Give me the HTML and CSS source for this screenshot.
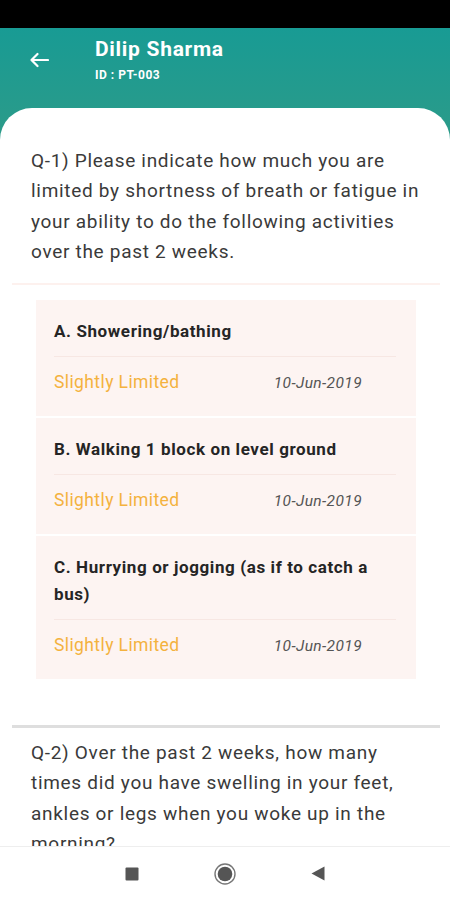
FILE: index.html
```html
<!DOCTYPE html>
<html lang="en">
<head>
<meta charset="utf-8">
<title>Dilip Sharma</title>
<link rel="stylesheet" href="styles.css">
</head>
<body>
<div class="app">
  <div class="status-bar"></div>
  <div class="top">
    <header class="header">
      <svg class="back" width="20" height="16" viewBox="0 0 20 16" aria-hidden="true">
        <path d="M19 8H2.5 M8.5 2L2.5 8l6 6" fill="none" stroke="#fff" stroke-width="2.2" stroke-linecap="round" stroke-linejoin="round"/>
      </svg>
      <div class="title-block">
        <div class="name">Dilip Sharma</div>
        <div class="pid">ID : PT-003</div>
      </div>
    </header>
    <main class="card">
      <section class="question">
        <p class="q-text">Q-1) Please indicate how much you are limited by shortness of breath or fatigue in your ability to do the following activities over the past 2 weeks.</p>
        <div class="soft-sep"></div>
        <div class="answers">
          <div class="answer">
            <div class="a-title">A. Showering/bathing</div>
            <div class="a-div"></div>
            <div class="a-row"><span class="a-status">Slightly Limited</span><span class="a-date">10-Jun-2019</span></div>
          </div>
          <div class="answer">
            <div class="a-title">B. Walking 1 block on level ground</div>
            <div class="a-div"></div>
            <div class="a-row"><span class="a-status">Slightly Limited</span><span class="a-date">10-Jun-2019</span></div>
          </div>
          <div class="answer">
            <div class="a-title">C. Hurrying or jogging (as if to catch a bus)</div>
            <div class="a-div"></div>
            <div class="a-row"><span class="a-status">Slightly Limited</span><span class="a-date">10-Jun-2019</span></div>
          </div>
        </div>
      </section>
      <div class="q-sep"></div>
      <section class="question next">
        <p class="q-text">Q-2) Over the past 2 weeks, how many times did you have swelling in your feet, ankles or legs when you woke up in the morning?</p>
      </section>
    </main>
  </div>
  <nav class="nav">
    <div class="slot">
      <svg width="14" height="14" viewBox="0 0 14 14"><rect x="0.5" y="0.5" width="13" height="13" rx="1" fill="#555"/></svg>
    </div>
    <div class="slot">
      <svg width="22" height="22" viewBox="0 0 22 22"><circle cx="11" cy="11" r="10" fill="none" stroke="#777" stroke-width="1.4"/><circle cx="11" cy="11" r="7.3" fill="#555"/></svg>
    </div>
    <div class="slot">
      <svg width="14" height="15" viewBox="0 0 14 15"><path d="M13.5 0.5V14.5L0.5 7.5Z" fill="#555"/></svg>
    </div>
  </nav>
</div>
</body>
</html>
```

FILE: styles.css
```css
* { box-sizing: border-box; }
html, body { margin: 0; padding: 0; }
body {
  width: 450px;
  height: 900px;
  overflow: hidden;
  font-family: Roboto, "Noto Sans", Arial, sans-serif;
  background: #fff;
}
.app {
  display: flex;
  flex-direction: column;
  height: 900px;
}
.status-bar {
  height: 28px;
  background: #000;
  flex: none;
}
.top {
  flex: 1;
  display: flex;
  flex-direction: column;
  background: linear-gradient(180deg, #189b94 0px, #2c9b89 110px, #2e9b88 140px);
  overflow: hidden;
}
.header {
  height: 80px;
  flex: none;
  display: flex;
  align-items: flex-start;
  padding: 9px 0 0 29px;
}
.back {
  margin-top: 14.5px;
  flex: none;
}
.title-block {
  margin-left: 46px;
  color: #fff;
}
.name {
  font-size: 21px;
  line-height: 25px;
  font-weight: 700;
  letter-spacing: 0.7px;
}
.pid {
  margin-top: 5px;
  font-size: 12px;
  line-height: 16px;
  font-weight: 700;
  letter-spacing: 0.5px;
}
.card {
  flex: 1;
  background: #fff;
  border-radius: 32px 32px 0 0;
  padding-top: 37.5px;
  overflow: hidden;
}
.q-text {
  margin: 0;
  padding: 0 19px 0 31px;
  font-size: 19px;
  line-height: 30.5px;
  letter-spacing: 0.7px;
  color: #3a3a3a;
}
.soft-sep {
  height: 2px;
  margin: 15px 10px 0 12px;
  background: #fdf1ee;
}
.answers {
  margin: 15px 0 0 36px;
  width: 380px;
  display: flex;
  flex-direction: column;
  gap: 2px;
}
.answer {
  background: #fdf4f2;
  padding: 18.5px 20px 18.5px 18px;
}
.a-title {
  font-size: 17px;
  line-height: 27px;
  font-weight: 700;
  letter-spacing: 0.6px;
  color: #252525;
}
.a-div {
  height: 1px;
  background: #f7e7e3;
  margin: 11px 0 12px;
}
.a-row {
  display: flex;
  justify-content: space-between;
  align-items: baseline;
  padding-right: 34px;
  line-height: 27px;
}
.a-status {
  font-size: 17.5px;
  letter-spacing: 0.4px;
  color: #f4b23e;
}
.a-date {
  font-size: 15.5px;
  font-style: italic;
  letter-spacing: 0.4px;
  color: #555;
}
.q-sep {
  height: 3px;
  margin: 46px 10px 0 12px;
  background: #dedede;
}
.question.next {
  margin-top: 10px;
}
.nav {
  height: 54px;
  flex: none;
  border-top: 1px solid #eeeeee;
  background: #fff;
  display: flex;
  justify-content: center;
  align-items: center;
}
.slot {
  width: 93px;
  display: flex;
  justify-content: center;
  align-items: center;
}
.slot svg { display: block; }
```
